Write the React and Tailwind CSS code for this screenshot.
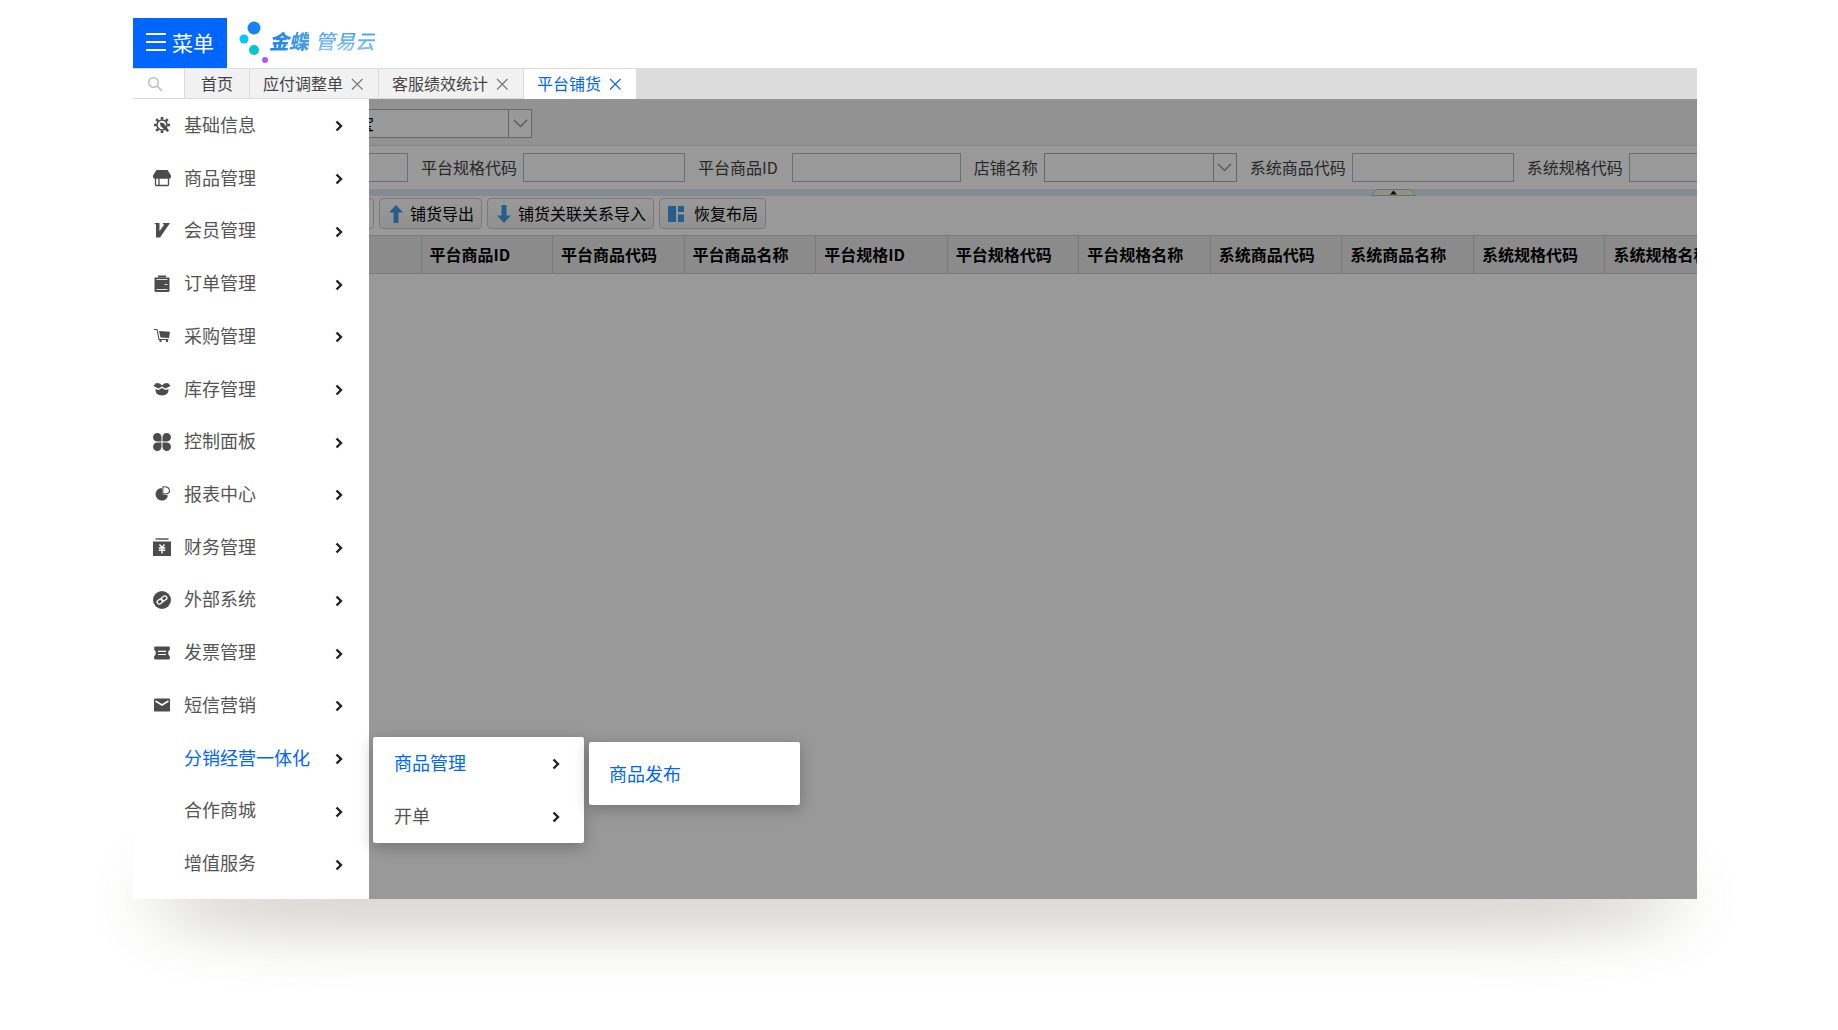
import React from "react";

const GearIcon = () => (
  <>
    <circle cx="9" cy="9" r="5" fill="none" stroke="currentColor" strokeWidth="1.6" />
    <path
      d="M9 1v2.5M9 14.5V17M1 9h2.5M14.5 9H17M3.2 3.2l2 2M3.2 14.8l2-2M12.8 5.2l2-2"
      stroke="currentColor"
      strokeWidth="2.6"
    />
    <path d="M7 6.5l3.5.5 5.5 7.5-1.6 1.6L7.5 10z" fill="currentColor" />
  </>
);

const ShopIcon = () => (
  <>
    <path d="M3.5 1h11L18 6.5V8a2 2 0 0 1-2 1.8H2A2 2 0 0 1 0 8V6.5z" fill="currentColor" />
    <path d="M2.5 9v6.5q0 1 1 1h11q1 0 1-1V9M6 9.5V16" fill="none" stroke="currentColor" strokeWidth="1.3" />
  </>
);

const VipIcon = () => <path d="M1 1h5.5v8L11 3 9.5 1H17L7 15.5H3V2.5z" fill="currentColor" />;

const OrderIcon = () => (
  <>
    <path d="M1.5 2.5h15v13q0 1.5-1.5 1.5H3q-1.5 0-1.5-1.5z" fill="currentColor" />
    <path d="M5 .5h8v2H5z" fill="currentColor" />
    <path d="M3.5 4.5h11M3.5 14.5h11M11.5 9.5h3" stroke="#ddd" strokeWidth="1" />
  </>
);

const CartIcon = () => (
  <>
    <path d="M1 2.5h3l2 10h9.5" fill="none" stroke="currentColor" strokeWidth="1.1" />
    <path d="M6 4l11 .8-1 6.2-8.5-.5z" fill="currentColor" />
    <path d="M7.5 12.5V15M14 12.5V15" stroke="currentColor" strokeWidth="2" />
  </>
);

const BoxIcon = () => (
  <>
    <path d="M3 3l4 .5L9 5.500l2-2 4-.5 2.500 3-5 2.500L9 6.5 5.500 8.500l-5-2.500z" fill="currentColor" />
    <path d="M2.5 9l3 1L9 8l3.500 2 3-1q.5 6-6.500 6.500Q2 15 2.500 9z" fill="currentColor" />
  </>
);

const CloverIcon = () => (
  <>
    <path d="M4.3 0a4.2 4.2 0 0 1 4.2 4.2v4.3H4.3a4.2 4.2 0 0 1 0-8.5z" fill="currentColor" />
    <path d="M13.7 0a4.2 4.2 0 0 0-4.2 4.2v4.3h4.2a4.2 4.2 0 0 0 0-8.5z" fill="currentColor" />
    <path d="M4.3 18a4.2 4.2 0 0 0 4.2-4.2V9.5H4.3a4.2 4.2 0 0 0 0 8.5z" fill="currentColor" />
    <path d="M13.7 18a4.2 4.2 0 0 1-4.2-4.2V9.5h4.2a4.2 4.2 0 0 1 0 8.5z" fill="currentColor" />
  </>
);

const PieIcon = () => (
  <>
    <path d="M9 3a6.3 6.3 0 1 0 6 7.5L9 9z" fill="currentColor" />
    <path d="M10 1.8q7-.6 6.5 5.2L14 9l-4.300-.5z" fill="none" stroke="currentColor" strokeWidth="1.1" />
  </>
);

const MoneyIcon = () => (
  <>
    <path d="M2.5 0h13v2h-13z" fill="currentColor" opacity="0.7" />
    <path d="M0 3.5h18V18H0z" fill="currentColor" />
    <path d="M6.5 6.5L9 9.5l2.5-3M5.800 10h6.400M5.800 12.300h6.400M9 9.500V15.500" fill="none" stroke="#fff" strokeWidth="1.4" />
  </>
);

const LinkIcon = () => (
  <>
    <circle cx="9" cy="9" r="9" fill="currentColor" />
    <g fill="none" stroke="#fff" strokeWidth="1.3">
      <rect x="8" y="5.5" width="6" height="4" rx="2" transform="rotate(-35 11 7.5)" />
      <rect x="4" y="8.5" width="6" height="4" rx="2" transform="rotate(-35 7 10.5)" />
    </g>
  </>
);

const TicketIcon = () => (
  <>
    <path
      d="M2 2.500h14q.8 0 .8.8V6q-1.600.5-1.600 3t1.600 3v2.700q0 .8-.8.8H2q-.8 0-.8-.8V12q1.600-.5 1.600-3T1.200 6V3.300q0-.8.8-.8z"
      fill="currentColor"
    />
    <path d="M5 7.3h8M5 10.5h8" stroke="#fff" strokeWidth="1.2" />
  </>
);

const MailIcon = () => (
  <>
    <rect x="1" y="2.5" width="16" height="13" rx="1.2" fill="currentColor" />
    <path d="M2.5 5L9 9l6.5-4" fill="none" stroke="#fff" strokeWidth="1.5" />
  </>
);

const menuItems = [
  { label: "基础信息", icon: GearIcon },
  { label: "商品管理", icon: ShopIcon },
  { label: "会员管理", icon: VipIcon },
  { label: "订单管理", icon: OrderIcon },
  { label: "采购管理", icon: CartIcon },
  { label: "库存管理", icon: BoxIcon },
  { label: "控制面板", icon: CloverIcon },
  { label: "报表中心", icon: PieIcon },
  { label: "财务管理", icon: MoneyIcon },
  { label: "外部系统", icon: LinkIcon },
  { label: "发票管理", icon: TicketIcon },
  { label: "短信营销", icon: MailIcon },
  {
    label: "分销经营一体化",
    active: true,
    children: [{ label: "商品管理", active: true, children: [{ label: "商品发布" }] }, { label: "开单" }],
  },
  { label: "合作商城" },
  { label: "增值服务" },
];

const columns = [
  "平台商品ID",
  "平台商品代码",
  "平台商品名称",
  "平台规格ID",
  "平台规格代码",
  "平台规格名称",
  "系统商品代码",
  "系统商品名称",
  "系统规格代码",
  "系统规格名称",
];

const Arrow = () => (
  <svg width="8" height="14" viewBox="0 0 8 14" className="shrink-0">
    <path d="M1.5 3.5L6 8l-4.5 4.5" fill="none" stroke="#222" strokeWidth="2.4" />
  </svg>
);

const Logo = () => (
  <div className="flex items-center gap-[2px] pb-[2px] pl-3">
    <svg width="28" height="42" viewBox="0 0 28 42" className="overflow-visible">
      <circle cx="15" cy="7" r="6.5" fill="#1683f0" />
      <circle cx="5" cy="18" r="4.5" fill="#00c8ff" />
      <circle cx="15" cy="29" r="5" fill="#00c8c8" />
      <circle cx="26" cy="39" r="3" fill="#a060f8" />
    </svg>
    <div className="flex items-center gap-[6px] pb-[2px] text-xl italic leading-6">
      <span className="bg-linear-to-r from-[#1c80e8] to-[#4aa0f0] bg-clip-text font-black text-transparent">金蝶</span>
      <span className="bg-linear-to-b from-[#3f9af5] to-[#8cc6fa] bg-clip-text font-medium text-transparent">管易云</span>
    </div>
  </div>
);

const Tab = ({ label, closable, active }) => (
  <div
    className={`flex items-center gap-[6px] ${closable ? "px-[13px]" : "px-4"} ${
      active ? "bg-white text-[#0066ff]" : "border-r border-b border-[#dcdcdc] bg-[#f1f1f1] text-[#444]"
    }`}
  >
    <button type="button" className="whitespace-nowrap pb-[2px]">
      {label}
    </button>
    {closable && (
      <button type="button" aria-label={`关闭${label}`} className={active ? "text-[#0066ff]" : "text-[#777]"}>
        <svg width="16" height="16" viewBox="0 0 16 16">
          <path d="M3 3l10.5 10.5M13.500 3L3 13.500" stroke="currentColor" strokeWidth="1.1" />
        </svg>
      </button>
    )}
  </div>
);

const Field = ({ id, label, className }) => (
  <div className="flex shrink-0 items-center gap-[6px]">
    <label htmlFor={id} className="whitespace-nowrap pb-[2px] text-[#444]">
      {label}
    </label>
    <input id={id} className={`h-[29px] border border-[#b5b5c6] bg-white px-2 ${className}`} />
  </div>
);

const Picker = ({ id, options, className, ...rest }) => (
  <div className={`relative flex h-[29px] shrink-0 border border-[#aaa] bg-white ${className}`}>
    <select id={id} className="w-full appearance-none px-2 text-black" {...rest}>
      {options.map((o) => (
        <option key={o}>{o}</option>
      ))}
    </select>
    <span className="pointer-events-none absolute inset-y-0 right-0 flex w-[23px] items-center justify-center border-l border-[#aaa]">
      <svg width="15" height="9" viewBox="0 0 15 9">
        <path d="M1 1l6.5 6.5L14 1" fill="none" stroke="#999" strokeWidth="1.5" />
      </svg>
    </span>
  </div>
);

const ToolButton = ({ label, path, wide }) => (
  <button
    type="button"
    className={`flex h-[31px] shrink-0 items-center whitespace-nowrap rounded border border-[#ccc] bg-linear-to-b from-white to-[#f2f2f2] px-[7px] text-black ${
      wide ? "gap-[9px]" : "gap-[5px]"
    }`}
  >
    <svg width="18" height="18" viewBox="0 0 18 18">
      <path d={path} fill="#3f9de6" />
    </svg>
    <span className="pb-[2px]">{label}</span>
  </button>
);

const MenuRow = ({ item }) => {
  const Icon = item.icon;
  return (
    <li className="relative flex">
      <button
        type="button"
        className={`flex w-full items-center pl-5 pr-[26px] ${item.active ? "text-[#0066ff]" : "text-[#555]"}`}
      >
        <span className="flex w-[31px] shrink-0 text-[#4c4c4c]">
          {Icon && (
            <svg width="18" height="18" viewBox="0 0 18 18">
              <Icon />
            </svg>
          )}
        </span>
        <span className="flex-1 whitespace-nowrap pb-[2px] text-left">{item.label}</span>
        <Arrow />
      </button>
      {item.children && <Flyout items={item.children} />}
    </li>
  );
};

const Flyout = ({ items }) => (
  <ul className="absolute top-[5px] left-[240px] z-20 w-[211px] rounded-xs bg-white shadow-[0_4px_16px_rgba(0,0,0,0.25)]">
    {items.map((item) => (
      <li key={item.label}>
        <button
          type="button"
          className={`flex h-[53px] w-full items-center justify-between pl-[21px] pr-[24px] ${
            item.active ? "text-[#0066ff]" : "text-[#555]"
          }`}
        >
          <span className="pb-[2px]">{item.label}</span>
          <Arrow />
        </button>
        {item.children && (
          <ul className="absolute top-[5px] left-[216px] w-[211px] rounded-xs bg-white shadow-[0_4px_16px_rgba(0,0,0,0.25)]">
            {item.children.map((child) => (
              <li key={child.label}>
                <button type="button" className="flex h-[63px] w-full items-center pl-5 text-[#0066ff]">
                  {child.label}
                </button>
              </li>
            ))}
          </ul>
        )}
      </li>
    ))}
  </ul>
);

const Content = () => (
  <main className="relative flex-1 overflow-hidden bg-white text-base">
    <div className="flex h-[47px] items-center border-b border-[#ddd] bg-[#f4f4f4] pt-[2px]">
      <Picker options={["淘宝"]} aria-label="平台" className="-ml-[36px] w-[199px]" />
    </div>

    <form className="flex h-[43px] items-center gap-[13px]">
      <input aria-label="平台商品代码" className="-ml-[123px] h-[29px] w-[162px] shrink-0 border border-[#b5b5c6] bg-white" />
      <Field id="sku" label="平台规格代码" className="w-[162px]" />
      <Field id="pid" label="平台商品ID" className="ml-2 w-[169px]" />
      <div className="flex shrink-0 items-center gap-[6px]">
        <label htmlFor="shop" className="pb-[2px] text-[#444]">
          店铺名称
        </label>
        <Picker id="shop" options={[""]} className="w-[193px]" />
      </div>
      <Field id="sysCode" label="系统商品代码" className="w-[162px]" />
      <Field id="sysSku" label="系统规格代码" className="w-[162px]" />
    </form>

    <div className="flex h-[7px] justify-end bg-[#dfe8f6] pr-[281px]">
      <svg width="45" height="7" viewBox="0 0 45 7">
        <path d="M5.5.5h34l5 6H.5z" fill="#f4f4ec" stroke="#bbb" />
        <path d="M19 5.5l3.5-4 3.5 4z" fill="#111" />
      </svg>
    </div>

    <div className="flex h-[39px] items-start gap-[5px] pt-[2px]">
      <button type="button" aria-label="铺货" className="-ml-4 h-[31px] w-[21px] shrink-0 rounded border border-[#ccc]" />
      <ToolButton label="铺货导出" path="M9 0l7 7.5h-4.500V18h-5V7.500H2z" />
      <ToolButton label="铺货关联关系导入" path="M9 18l7-7.500h-4.500V0h-5v10.500H2z" />
      <ToolButton label="恢复布局" path="M1 1h8v16H1zM11 1h6v6h-6zM11 9.500h6V17h-6z" wide />
    </div>

    <table className="w-[calc(100%+40px)] table-fixed border-collapse">
      <thead>
        <tr className="h-[38px] bg-[#e8e8e8]">
          <th className="w-[52px] border-y border-r border-[#ccc]" />
          {columns.map((c) => (
            <th
              key={c}
              scope="col"
              className="whitespace-nowrap border border-[#ccc] pb-[2px] pl-2 text-left font-bold text-black"
            >
              {c}
            </th>
          ))}
        </tr>
      </thead>
    </table>

    <div className="absolute inset-0 bg-black/40" />
  </main>
);

export default function App() {
  return (
    <div className="flex min-h-screen flex-col overflow-hidden bg-white pt-[18px] pr-[141px] pb-[131px] pl-[133px] font-['Noto_Sans_CJK_SC',sans-serif]">
      <div className="relative flex flex-1 flex-col">
        {/* soft shadow under the window */}
        <div className="absolute inset-x-[10px] bottom-0 h-[60px] rounded-[200px/30px] shadow-[0_30px_60px_rgba(100,95,75,0.32)]" />

        <header className="relative flex h-[50px] bg-white">
          <button
            type="button"
            className="flex w-[94px] items-center justify-center gap-[6px] bg-[#0066ff] text-[21px] leading-6 text-white"
          >
            <svg width="20" height="20" viewBox="0 0 20 20">
              <path d="M0 1h20M0 9h20M0 17h20" stroke="#fff" strokeWidth="2" />
            </svg>
            <span className="pb-[2px]">菜单</span>
          </button>
          <Logo />
        </header>

        <nav className="relative flex h-[31px] border-t border-[#dcdcdc] bg-[#dcdcdc] text-base">
          <button
            type="button"
            aria-label="搜索"
            className="flex w-[52px] items-center border-r border-b border-[#dcdcdc] bg-white pl-[14px] text-[#bbb]"
          >
            <svg width="16" height="16" viewBox="0 0 16 16">
              <circle cx="6.5" cy="6.5" r="4.8" fill="none" stroke="currentColor" strokeWidth="1.4" />
              <path d="M10 10l5 5" stroke="currentColor" strokeWidth="1.6" />
            </svg>
          </button>
          <Tab label="首页" />
          <Tab label="应付调整单" closable />
          <Tab label="客服绩效统计" closable />
          <Tab label="平台铺货" closable active />
        </nav>

        <div className="relative flex flex-1">
          <aside className="z-10 flex w-[236px] shrink-0 bg-white pb-[9px] text-[18px]">
            <ul className="grid w-full auto-rows-fr">
              {menuItems.map((item) => (
                <MenuRow key={item.label} item={item} />
              ))}
            </ul>
          </aside>
          <Content />
        </div>
      </div>
    </div>
  );
}
